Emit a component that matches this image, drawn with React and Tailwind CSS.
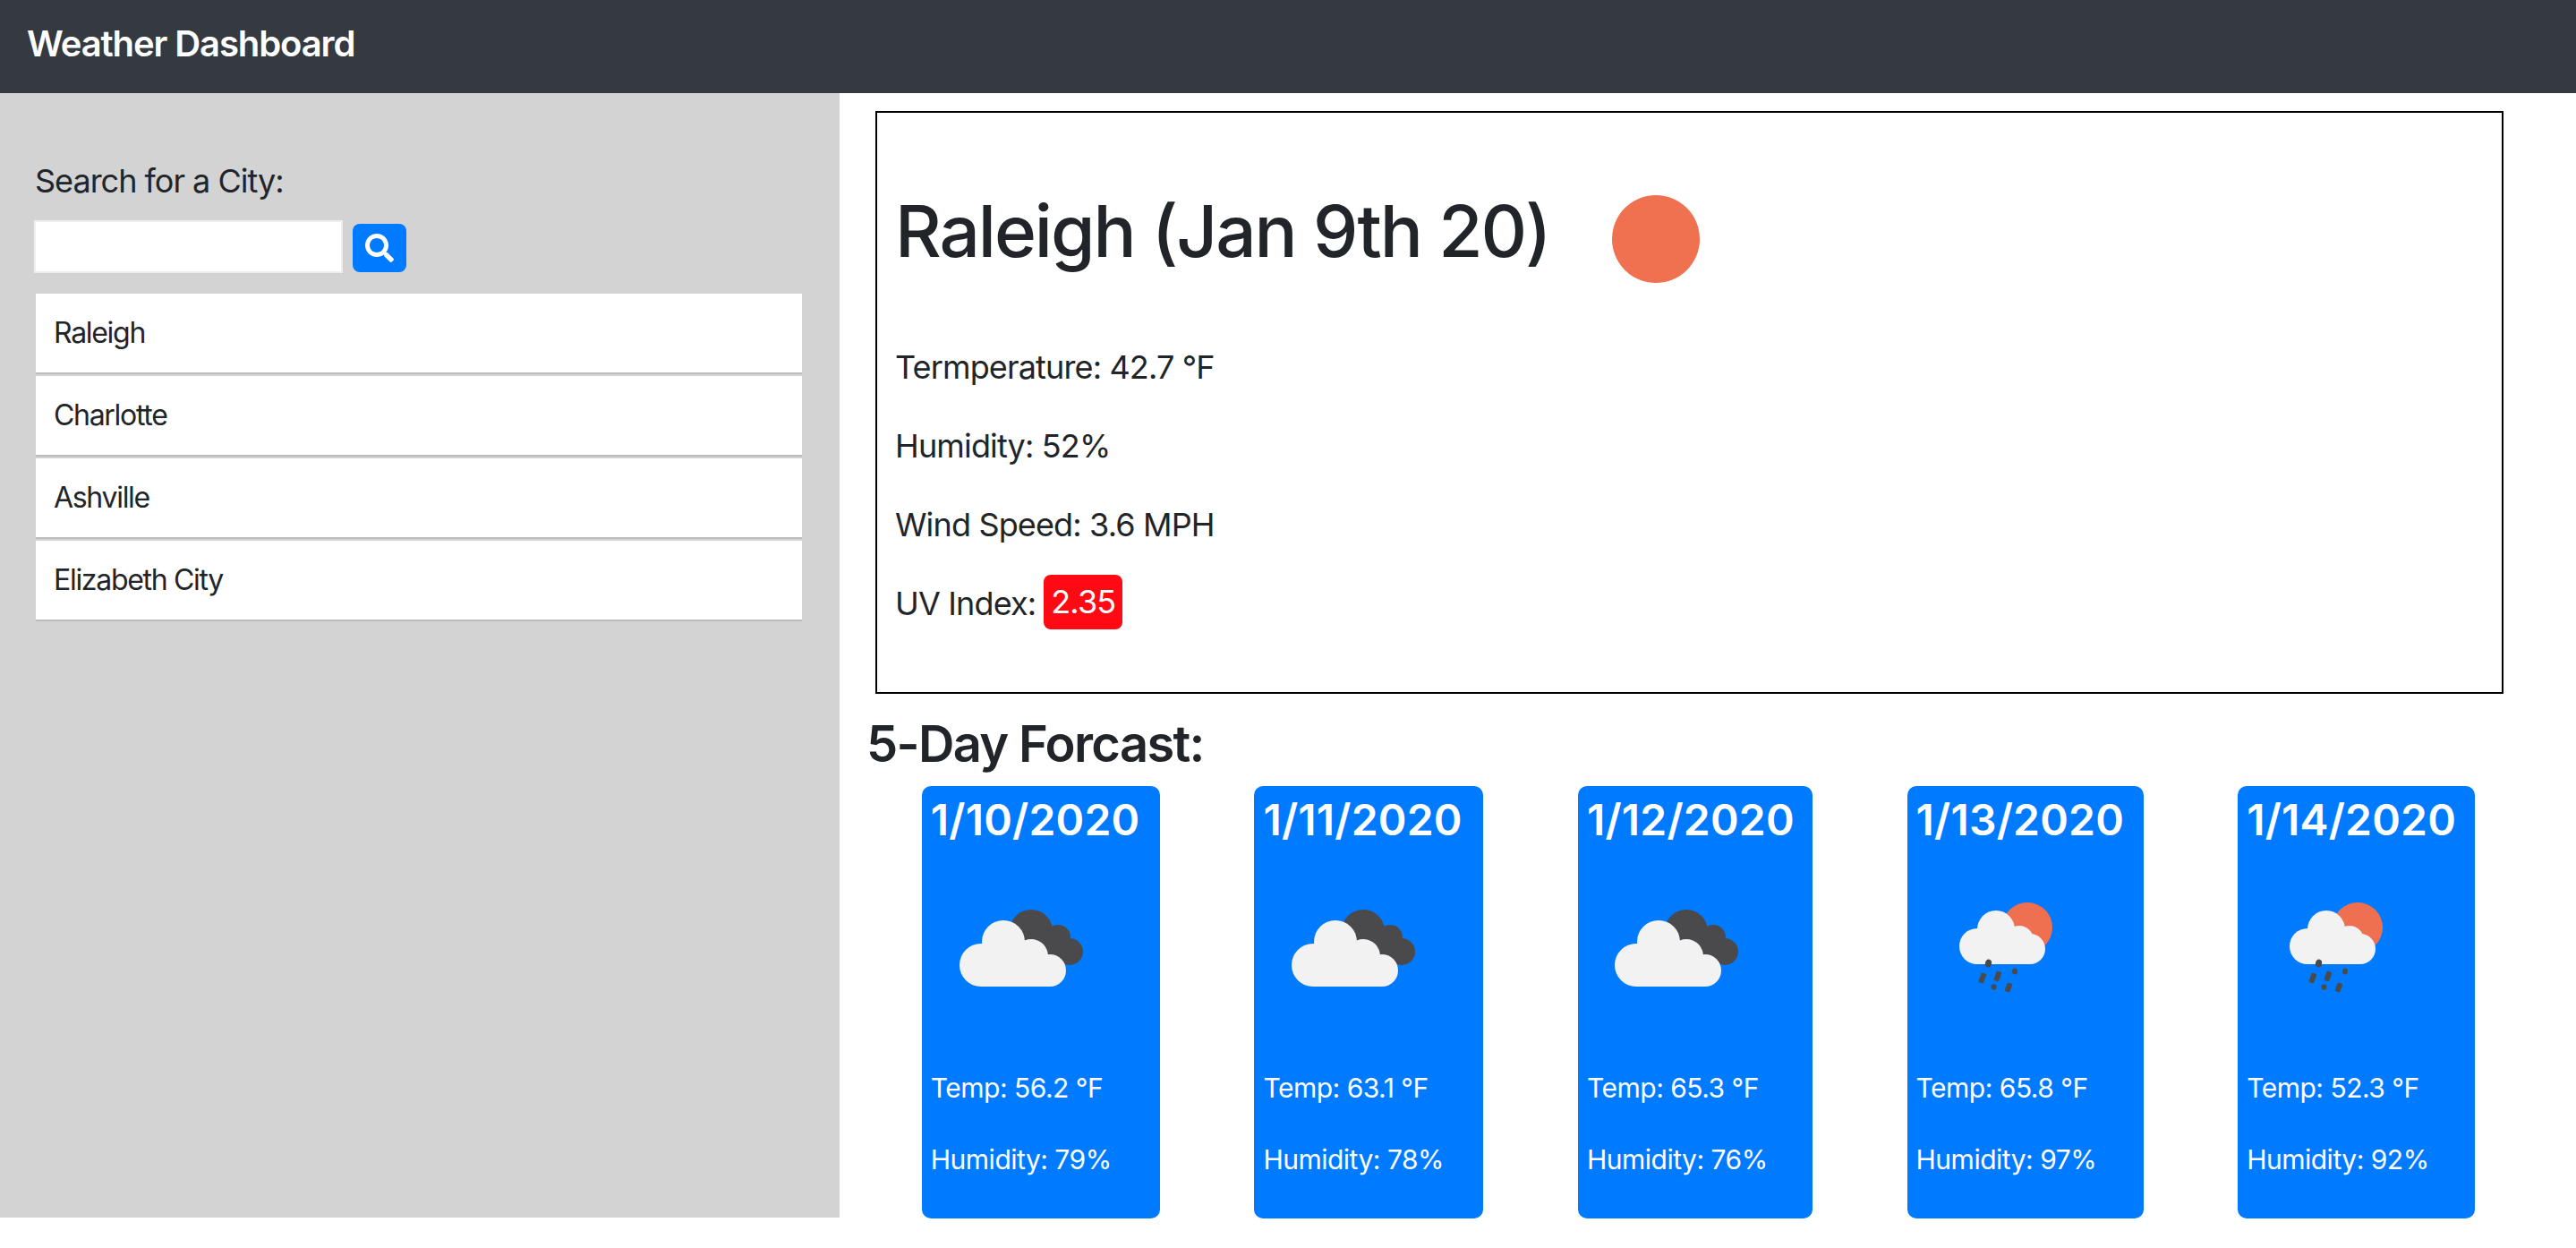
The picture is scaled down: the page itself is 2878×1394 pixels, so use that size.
import React from "react";
import { FaSearch } from "react-icons/fa";

const font = "font-['Inter','Liberation_Sans',sans-serif]";

function CloudIcon() {
  return (
    <svg width="200" height="140" viewBox="0 0 200 140" className="block">
      <g fill="#4a4a4c">
        <circle cx="112" cy="62" r="24" />
        <circle cx="142" cy="69" r="14" />
        <circle cx="155" cy="85" r="15" />
        <path d="M100 60 L140 60 L160 90 L148 100 L120 90 Z" />
      </g>
      <g fill="#f2f2f2">
        <circle cx="56" cy="100" r="24" />
        <circle cx="81" cy="74" r="24" />
        <circle cx="112" cy="90" r="19" />
        <circle cx="133" cy="106" r="18" />
        <path d="M56 124 L133 124 L133 95 L70 70 L56 90 Z" />
      </g>
    </svg>
  );
}

function RainIcon() {
  return (
    <svg width="200" height="140" viewBox="0 0 200 140" className="block">
      <circle cx="116" cy="58" r="28" fill="#ef7050" />
      <g fill="#f2f2f2">
        <circle cx="60" cy="79" r="20" />
        <circle cx="81" cy="60" r="21" />
        <circle cx="107" cy="72" r="16" />
        <circle cx="119" cy="82" r="17" />
        <path d="M60 99 L119 99 L119 80 L80 60 L60 80 Z" />
      </g>
      <g fill="#4a4a4a">
        <ellipse cx="72.5" cy="98" rx="3.5" ry="4.5" transform="rotate(15 72.5 98)" />
        <rect x="63" y="109" width="6" height="11" rx="1.5" transform="rotate(20 66 114)" />
        <rect x="80" y="107" width="6" height="11" rx="1.5" transform="rotate(20 83 112)" />
        <ellipse cx="102" cy="107" rx="3" ry="3.5" />
        <rect x="92" y="120" width="6" height="10" rx="1.5" transform="rotate(20 95 125)" />
        <ellipse cx="78.5" cy="124.5" rx="3" ry="3.2" />
      </g>
    </svg>
  );
}

const cards = [
  { date: "1/10/2020", temp: "56.2", hum: "79", w: "w-[266px]", rain: false, ml: "ml-0" },
  { date: "1/11/2020", temp: "63.1", hum: "78", w: "w-[256px]", rain: false, ml: "ml-0" },
  { date: "1/12/2020", temp: "65.3", hum: "76", w: "w-[262px]", rain: false, ml: "-ml-[1px]" },
  { date: "1/13/2020", temp: "65.8", hum: "97", w: "w-[264px]", rain: true, ml: "ml-[8px]" },
  { date: "1/14/2020", temp: "52.3", hum: "92", w: "w-[265px]", rain: true, ml: "ml-[8px]" },
];

const cities = ["Raleigh", "Charlotte", "Ashville", "Elizabeth City"];

export default function App() {
  return (
    <div className={`${font} bg-white min-h-[1394px] text-[#212529]`}>
      <nav className="h-[104px] bg-[#343a40] flex items-center px-[30px] pb-[6px]">
        <span className="text-white text-[40px] font-semibold tracking-[-1.1px]">Weather Dashboard</span>
      </nav>
      <div className="flex h-[1256px]">
        <aside className="w-[938px] bg-[#d3d3d3] pt-[72px] px-[38px]">
          <label className="block text-[36px] leading-[52px] tracking-[-1px] ml-[1px]">Search for a City:</label>
          <div className="mt-[18px] flex items-center">
            <input className="w-[345px] h-[59px] bg-white border-2 border-[#eeeeee] outline-none" />
            <button className="ml-[11px] w-[60px] h-[54px] mt-[3px] rounded-[8px] bg-[#007bff] flex items-center justify-center text-white">
              <FaSearch className="w-[32px] h-[32px]" />
            </button>
          </div>
          <ul className="mt-[23px] ml-[2px] w-[856px] flex flex-col gap-[2px]">
            {cities.map((c) => (
              <li key={c} className="h-[90px] bg-white border-b-2 border-[#bcbcbc] flex items-center pl-[20px] text-[32px] tracking-[-1.3px]">
                {c}
              </li>
            ))}
          </ul>
        </aside>
        <main className="flex-1 min-w-0">
          <section className="ml-[40px] mt-[20px] w-[1819px] h-[651px] border-2 border-black pl-[20px] pt-[82px]">
            <div className="flex items-center h-[100px]">
              <h1 className="text-[80px] leading-[96px] font-medium tracking-[-2.05px]">Raleigh (Jan 9th 20)</h1>
              <div className="ml-[70px] mt-[17px] w-[98px] h-[98px] rounded-full bg-[#f07150]" />
            </div>
            <p className="mt-[78px] text-[36px] leading-[48px] tracking-[-0.85px]">Termperature: 42.7 °F</p>
            <p className="mt-[40px] text-[36px] leading-[48px] tracking-[-0.85px]">Humidity: 52%</p>
            <p className="mt-[40px] text-[36px] leading-[48px] tracking-[-0.85px]">Wind Speed: 3.6 MPH</p>
            <div className="mt-[40px] h-[48px] flex items-center text-[36px] tracking-[-0.85px]">
              <span>UV Index:</span>
              <span className="ml-[9px] mt-[-4px] w-[88px] h-[61px] shrink-0 flex items-center justify-center rounded-[8px] bg-[#ff0a14] text-white">2.35</span>
            </div>
          </section>
          <h3 className="ml-[30px] mt-[24px] text-[56px] leading-[64px] font-semibold tracking-[-1.65px]">5-Day Forcast:</h3>
          <div className="mt-[15px] ml-[39px] w-[1841px] flex justify-around">
            {cards.map((c) => (
              <div key={c.date} className={`${c.w} h-[483px] rounded-[10px] bg-[#007bff] text-white px-[10px] pt-[9px]`}>
                <div className="text-[48px] leading-[58px] font-semibold tracking-[0.2px] whitespace-nowrap">{c.date}</div>
                <div className={`${c.ml} mt-[33px]`}>{c.rain ? <RainIcon /> : <CloudIcon />}</div>
                <p className="mt-[76px] text-[30px] leading-[42px] tracking-[-0.5px]">Temp: {c.temp} °F</p>
                <p className="mt-[38px] text-[30px] leading-[42px] tracking-[-0.5px]">Humidity: {c.hum}%</p>
              </div>
            ))}
          </div>
        </main>
      </div>
    </div>
  );
}
